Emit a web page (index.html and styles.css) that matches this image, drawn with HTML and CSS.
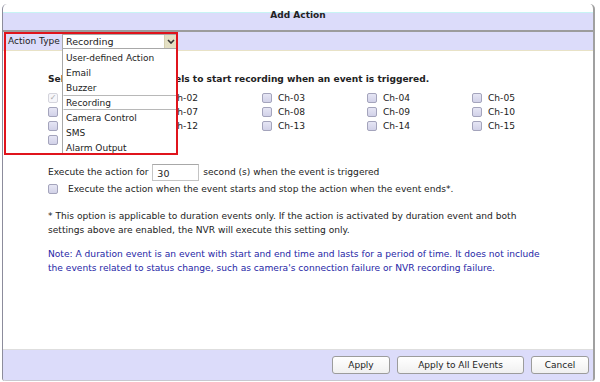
FILE: index.html
```html
<!DOCTYPE html>
<html lang="en">
<head>
    <meta charset="UTF-8">
    <title>Add Action</title>
    <link rel="stylesheet" href="styles.css">
</head>
<body>
    <div class="dialog">
        <div class="title-bar"><span class="title">Add Action</span></div>

        <div class="type-bar">
            <span class="type-label">Action Type</span>
            <div class="select">
                <span class="select-value">Recording</span>
                <span class="select-arrow">
                    <svg width="8" height="5" viewBox="0 0 8 5"><polyline points="1,1 4,4 7,1" fill="none" stroke="#333" stroke-width="1.6"/></svg>
                </span>
            </div>
        </div>

        <div class="content">
            <p class="heading">Select the camera channels to start recording when an event is triggered.</p>

            <div class="channels">
                <label class="channel"><span class="cb checked">&#10003;</span>Ch-01</label>
                <label class="channel"><span class="cb"></span>Ch-02</label>
                <label class="channel"><span class="cb"></span>Ch-03</label>
                <label class="channel"><span class="cb"></span>Ch-04</label>
                <label class="channel"><span class="cb"></span>Ch-05</label>
                <label class="channel"><span class="cb"></span>Ch-06</label>
                <label class="channel"><span class="cb"></span>Ch-07</label>
                <label class="channel"><span class="cb"></span>Ch-08</label>
                <label class="channel"><span class="cb"></span>Ch-09</label>
                <label class="channel"><span class="cb"></span>Ch-10</label>
                <label class="channel"><span class="cb"></span>Ch-11</label>
                <label class="channel"><span class="cb"></span>Ch-12</label>
                <label class="channel"><span class="cb"></span>Ch-13</label>
                <label class="channel"><span class="cb"></span>Ch-14</label>
                <label class="channel"><span class="cb"></span>Ch-15</label>
                <label class="channel"><span class="cb"></span>Ch-16</label>
            </div>

            <div class="exec-row">Execute the action for <span class="num-input">30</span> second (s) when the event is triggered</div>

            <div class="check-row">
                <span class="cb"></span>Execute the action when the event starts and stop the action when the event ends*.
            </div>

            <p class="note">* This option is applicable to duration events only. If the action is activated by duration event and both<br>settings above are enabled, the NVR will execute this setting only.</p>

            <p class="note blue">Note: A duration event is an event with start and end time and lasts for a period of time. It does not include<br>the events related to status change, such as camera's connection failure or NVR recording failure.</p>
        </div>

        <div class="footer">
            <button class="btn apply">Apply</button>
            <button class="btn apply-all">Apply to All Events</button>
            <button class="btn cancel">Cancel</button>
        </div>

        <!-- open dropdown of the select -->
        <ul class="dropdown">
            <li>User-defined Action</li>
            <li>Email</li>
            <li>Buzzer</li>
            <li class="current">Recording</li>
            <li>Camera Control</li>
            <li>SMS</li>
            <li>Alarm Output</li>
        </ul>

        <div class="highlight"></div>
    </div>
</body>
</html>
```

FILE: styles.css
```css
* {
    margin: 0;
    padding: 0;
    box-sizing: border-box;
}

body {
    width: 600px;
    height: 382px;
    background: #fff;
    font-family: 'DejaVu Sans', Verdana, sans-serif;
    font-size: 9.1px;
    color: #222;
    overflow: hidden;
}

.dialog {
    position: relative;
    height: 377px;
    margin: 4px 5px 0 2px;
    padding-top: 8px;
    border-left: 1px solid #8c8c9c;
    border-right: 2px solid #a0a0a0;
    border-radius: 5px 5px 3px 3px;
    display: flex;
    flex-direction: column;
    background: #fff;
}

.title-bar {
    height: 20px;
    background: #dcdcfa;
    border-top: 1px solid #c8f4f4;
    border-bottom: 2px solid #9c9c9c;
    text-align: center;
}

.title {
    display: block;
    margin-top: -4px;
    line-height: 12px;
    font-weight: bold;
    font-size: 9px;
    color: #222;
}

.type-bar {
    height: 19px;
    background: #dcdcfa;
    border-bottom: 1px solid #e8e2c6;
    display: flex;
    align-items: center;
    padding-left: 5px;
    font-size: 9px;
}

.type-label {
    width: 54px;
    color: #222;
}

.select {
    width: 115px;
    height: 15px;
    background: #fff;
    border: 1px solid #a8a8a8;
    display: flex;
    align-items: center;
    justify-content: space-between;
}

.select-value {
    padding-left: 3px;
    font-size: 9.5px;
}

.select-arrow {
    width: 12px;
    height: 13px;
    background: #e4e0c4;
    border-left: 1px solid #d4d0b0;
    display: flex;
    align-items: center;
    justify-content: center;
}

.content {
    flex: 1;
    padding: 21px 0 0 45px;
    background: #fff;
}

.heading {
    font-weight: bold;
    font-size: 9.1px;
    line-height: 14px;
}

.channels {
    margin-top: 5px;
    display: grid;
    grid-template-columns: 107px 107px 105px 105px 105px;
}

.channel {
    display: flex;
    align-items: center;
    height: 14px;
}

.cb {
    width: 10px;
    height: 10px;
    margin-right: 6px;
    border: 1px solid #a4a4bc;
    border-radius: 2px;
    background: linear-gradient(#e6e6f4, #d2d2e8);
    flex-shrink: 0;
}

.cb.checked {
    background: #f6f6fa;
    border-color: #d4d4dc;
    color: #aaa;
    font-size: 8px;
    line-height: 8px;
    text-align: center;
}

.exec-row {
    margin-top: 17px;
    height: 16px;
    line-height: 16px;
}

.num-input {
    display: inline-block;
    vertical-align: top;
    width: 47px;
    height: 17px;
    margin: 0 1px 0 1px;
    padding-left: 4px;
    line-height: 17px;
    font-size: 9.5px;
    border: 1px solid #c4c4c4;
    border-top-color: #a8a8a8;
}

.check-row {
    margin-top: 2px;
    display: flex;
    align-items: center;
    height: 14px;
}

.check-row .cb {
    margin-right: 10px;
}

.note {
    margin-top: 13px;
    line-height: 14px;
}

.note.blue {
    margin-top: 10px;
    color: #2626a6;
}

.footer {
    height: 32px;
    background: #dcdcfa;
    border-top: 1px solid #dedede;
    border-bottom: 1px solid #c8c8d0;
    display: flex;
    align-items: center;
    justify-content: flex-end;
    gap: 7px;
    padding-right: 4px;
    border-radius: 0 0 3px 3px;
}

.btn {
    height: 18px;
    border: 1px solid #9c9c9c;
    border-radius: 3px;
    background: linear-gradient(#ffffff, #f0f0f0);
    font-family: 'DejaVu Sans', Verdana, sans-serif;
    font-size: 9px;
    color: #222;
}

.apply,
.cancel {
    width: 58px;
}

.apply-all {
    width: 127px;
}

.dropdown {
    position: absolute;
    top: 45px;
    left: 59px;
    width: 115px;
    height: 106px;
    list-style: none;
    background: #fff;
    border-left: 1px solid #a8a8a8;
    padding-top: 1px;
}

.dropdown li {
    height: 15px;
    line-height: 14px;
    padding-left: 2px;
    font-size: 9px;
    border: 1px solid transparent;
}

.dropdown li.current {
    border-color: #b8b8b8;
    border-left-color: transparent;
}

.highlight {
    position: absolute;
    top: 28px;
    left: 1px;
    width: 174px;
    height: 123px;
    border: 2px solid #e0141c;
    pointer-events: none;
}
```
